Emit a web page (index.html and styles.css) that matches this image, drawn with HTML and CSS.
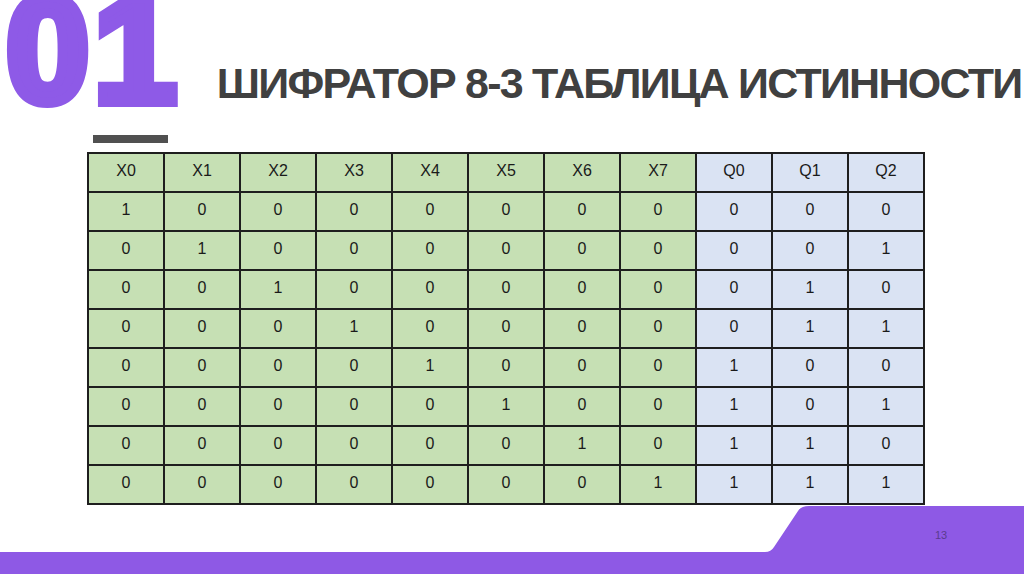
FILE: index.html
```html
<!DOCTYPE html>
<html lang="ru">
<head>
<meta charset="utf-8">
<title>Шифратор 8-3</title>
<link rel="stylesheet" href="styles.css">
</head>
<body>
<div class="slide">
  <header class="header">
    <div class="num">01</div>
    <h1 class="title">ШИФРАТОР 8-3 ТАБЛИЦА ИСТИННОСТИ</h1>
  </header>
  <div class="dash"></div>
  <table class="truth">
    <tr><td class="in">X0</td><td class="in">X1</td><td class="in">X2</td><td class="in">X3</td><td class="in">X4</td><td class="in">X5</td><td class="in">X6</td><td class="in">X7</td><td class="out">Q0</td><td class="out">Q1</td><td class="out">Q2</td></tr>
    <tr><td class="in">1</td><td class="in">0</td><td class="in">0</td><td class="in">0</td><td class="in">0</td><td class="in">0</td><td class="in">0</td><td class="in">0</td><td class="out">0</td><td class="out">0</td><td class="out">0</td></tr>
    <tr><td class="in">0</td><td class="in">1</td><td class="in">0</td><td class="in">0</td><td class="in">0</td><td class="in">0</td><td class="in">0</td><td class="in">0</td><td class="out">0</td><td class="out">0</td><td class="out">1</td></tr>
    <tr><td class="in">0</td><td class="in">0</td><td class="in">1</td><td class="in">0</td><td class="in">0</td><td class="in">0</td><td class="in">0</td><td class="in">0</td><td class="out">0</td><td class="out">1</td><td class="out">0</td></tr>
    <tr><td class="in">0</td><td class="in">0</td><td class="in">0</td><td class="in">1</td><td class="in">0</td><td class="in">0</td><td class="in">0</td><td class="in">0</td><td class="out">0</td><td class="out">1</td><td class="out">1</td></tr>
    <tr><td class="in">0</td><td class="in">0</td><td class="in">0</td><td class="in">0</td><td class="in">1</td><td class="in">0</td><td class="in">0</td><td class="in">0</td><td class="out">1</td><td class="out">0</td><td class="out">0</td></tr>
    <tr><td class="in">0</td><td class="in">0</td><td class="in">0</td><td class="in">0</td><td class="in">0</td><td class="in">1</td><td class="in">0</td><td class="in">0</td><td class="out">1</td><td class="out">0</td><td class="out">1</td></tr>
    <tr><td class="in">0</td><td class="in">0</td><td class="in">0</td><td class="in">0</td><td class="in">0</td><td class="in">0</td><td class="in">1</td><td class="in">0</td><td class="out">1</td><td class="out">1</td><td class="out">0</td></tr>
    <tr><td class="in">0</td><td class="in">0</td><td class="in">0</td><td class="in">0</td><td class="in">0</td><td class="in">0</td><td class="in">0</td><td class="in">1</td><td class="out">1</td><td class="out">1</td><td class="out">1</td></tr>
  </table>
  <footer class="footer">
    <svg class="footer-shape" width="1024" height="68" viewBox="0 0 1024 68">
      <path d="M0,46 H765 Q771,46 774,41 L798,5 Q801,0 809,0 H1024 V68 H0 Z" fill="#8e59e5"/>
    </svg>
    <span class="page-num">13</span>
  </footer>
</div>
</body>
</html>
```

FILE: styles.css
```css
html, body {
  margin: 0;
  padding: 0;
  background: #ffffff;
}

.slide {
  width: 1024px;
  height: 574px;
  overflow: hidden;
  display: flex;
  flex-direction: column;
  font-family: "Liberation Sans", Arial, sans-serif;
}

.header {
  display: flex;
  align-items: flex-start;
  height: 125px;
}

.num {
  font-family: "Liberation Sans", Arial, sans-serif;
  font-weight: 700;
  font-size: 150px;
  line-height: 150px;
  height: 150px;
  margin-top: -25px;
  margin-left: 6px;
  color: #8e5ae7;
  -webkit-text-stroke: 10px #8e5ae7;
  letter-spacing: 4px;
  flex: none;
}

.title {
  margin: 62px 0 0 36px;
  font-family: "Liberation Sans", Arial, sans-serif;
  font-weight: 700;
  font-size: 43px;
  line-height: 43px;
  letter-spacing: -1.75px;
  color: #404040;
  white-space: nowrap;
}

.dash {
  width: 75px;
  height: 8px;
  margin: 10px 0 0 93px;
  background: #505050;
  flex: none;
}

.truth {
  margin: 9px 0 0 87px;
  width: 838px;
  height: 353px;
  border-collapse: collapse;
  table-layout: fixed;
  flex: none;
}

.truth td {
  border: 2px solid #1e1e1e;
  text-align: center;
  vertical-align: middle;
  font-size: 16px;
  color: #1a1a1a;
  padding: 0 0 3px 0;
}

.truth td.in {
  background: #c6e0b4;
}

.truth td.out {
  background: #dae3f3;
}

.footer {
  margin-top: auto;
  height: 68px;
  display: grid;
  flex: none;
}

.footer-shape {
  grid-area: 1 / 1;
  display: block;
}

.page-num {
  grid-area: 1 / 1;
  justify-self: start;
  align-self: start;
  margin: 24px 0 0 935px;
  font-size: 11px;
  line-height: 11px;
  color: #5a3b8e;
}
```
